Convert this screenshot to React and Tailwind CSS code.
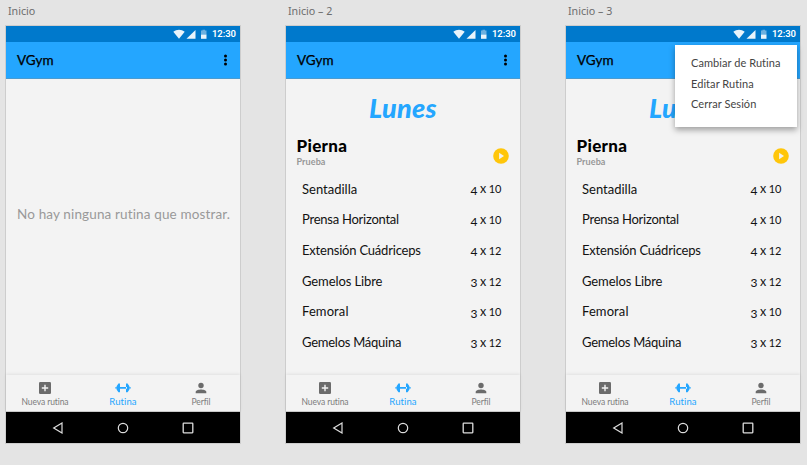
import React from "react";

const exercises = [
  { name: "Sentadilla", track: "tracking-[0px]", sets: "4", reps: "10" },
  { name: "Prensa Horizontal", track: "tracking-[-0.25px]", sets: "4", reps: "10" },
  { name: "Extensión Cuádriceps", track: "tracking-[-0.2px]", sets: "4", reps: "12" },
  { name: "Gemelos Libre", track: "tracking-[-0.1px]", sets: "3", reps: "12" },
  { name: "Femoral", track: "tracking-[0.1px]", sets: "3", reps: "10" },
  { name: "Gemelos Máquina", track: "tracking-[-0.25px]", sets: "3", reps: "12" },
];

function StatusBar() {
  return (
    <div className="flex h-4 shrink-0 items-center justify-end bg-[#0079cc] pr-[3px]">
      <svg className="h-4 w-[36px] shrink-0" viewBox="0 0 36 16">
        <path d="M0.3 5.7C3.5 3 8.5 3 11.7 5.7L6 12.8Z" fill="#e9f4fb" />
        <path d="M22.5 4V12.8H13.5Z" fill="#e9f4fb" />
        <path d="M28 4.5H29.5V3.8H32V4.5H33.5V9H28Z" fill="#6db1e0" />
        <path d="M28 8.7H33.5V12.8H28Z" fill="#e9f4fb" />
      </svg>
      <span className="ml-[3px] w-[25px] whitespace-nowrap font-['Roboto',sans-serif] text-[9.5px] font-semibold leading-4 tracking-[-0.1px] text-white">
        12:30
      </span>
    </div>
  );
}

function AppBar() {
  return (
    <div className="flex h-[37px] shrink-0 items-center justify-between border-b border-[#4b9bd0] bg-[#24a6ff] pl-[11px] pr-[13px]">
      <span className="font-['Lato',sans-serif] text-[13.5px] font-normal leading-[36px] text-black [-webkit-text-stroke:0.25px_black]">VGym</span>
      <svg className="h-3 w-[3px]" viewBox="0 0 3 12">
        <circle cx="1.5" cy="2" r="1.5" />
        <circle cx="1.5" cy="6" r="1.5" />
        <circle cx="1.5" cy="10" r="1.5" />
      </svg>
    </div>
  );
}

function BottomNav() {
  return (
    <div className="grid h-[37px] shrink-0 grid-cols-3 border-b border-[#c9c9c9] bg-[#f3f3f3] font-['Lato',sans-serif] text-[#7c7c7c] shadow-[0_-1px_3px_rgba(0,0,0,0.08)]">
      <div className="flex flex-col items-center pt-[7px]">
        <svg className="h-3 w-3" viewBox="0 0 12 12">
          <rect width="12" height="12" rx="1.2" fill="#6b6b6b" />
          <path d="M6 2.8V9.2M2.8 6H9.2" stroke="#f3f3f3" strokeWidth="1.4" />
        </svg>
        <span className="mt-[3px] whitespace-nowrap text-[8.5px] leading-[10px] tracking-[-0.1px]">Nueva rutina</span>
      </div>
      <div className="flex flex-col items-center pt-[7px] text-[#24a6ff]">
        <svg className="h-3 w-4" viewBox="0 0 16 12" fill="currentColor">
          <path d="M4 5H12V6.8H4ZM3.4 1.6H5V10.2H3.4L1.6 7.6V6.6H0.2V5.2H1.6V4.2ZM12.6 1.6H11V10.2H12.6L14.4 7.6V6.6H15.8V5.2H14.4V4.2Z" />
        </svg>
        <span className="mt-[3px] text-[9.5px] leading-[10px] tracking-[0.1px]">Rutina</span>
      </div>
      <div className="flex flex-col items-center pt-[7px]">
        <svg className="h-3 w-3" viewBox="0 0 12 12" fill="#6b6b6b">
          <circle cx="6" cy="3.5" r="2.7" />
          <path d="M0.7 11.3V9.8C0.7 8.1 4 7.4 6 7.4S11.3 8.1 11.3 9.8V11.3Z" />
        </svg>
        <span className="mt-[3px] text-[8.5px] leading-[10px] tracking-[-0.1px]">Perfil</span>
      </div>
    </div>
  );
}

function SystemNav() {
  return (
    <div className="flex h-[31px] shrink-0 items-center justify-between bg-black pl-[46px] pr-[46px]">
      <svg className="h-3 w-3" viewBox="0 0 12 12" fill="none" stroke="#ddd" strokeWidth="1.2">
        <path d="M10 1V11L1.7 6Z" />
      </svg>
      <svg className="h-3 w-3" viewBox="0 0 12 12" fill="none" stroke="#ddd" strokeWidth="1.2">
        <circle cx="6" cy="6" r="4.7" />
      </svg>
      <svg className="h-3 w-3" viewBox="0 0 12 12" fill="none" stroke="#ddd" strokeWidth="1.3">
        <rect x="1.2" y="1.2" width="9.6" height="9.6" rx="0.5" />
      </svg>
    </div>
  );
}

function Routine() {
  return (
    <div className="flex h-full flex-col font-['Lato',sans-serif]">
      <h1 className="pt-[12px] text-center text-[27px] font-black italic leading-[34px] tracking-[0.3px] text-[#24a6ff]">Lunes</h1>
      <div className="flex justify-between pl-[10.5px] pr-[11px] pt-[10px]">
        <div>
          <h2 className="text-[17px] font-black leading-[22px] tracking-[0.3px] text-black">Pierna</h2>
          <p className="text-[9px] font-bold leading-[10px] tracking-[0.1px] text-[#979797]">Prueba</p>
        </div>
        <svg className="mt-[13px] h-4 w-4" viewBox="0 0 16 16">
          <circle cx="8" cy="8" r="7.8" fill="#ffc60a" />
          <path d="M6.1 4.7V11.3L11 8Z" fill="#f3f3f3" />
        </svg>
      </div>
      <ul className="mt-[7px] pl-4 pr-[18.5px] text-[13px] text-[#111]">
        {exercises.map((item) => (
          <li key={item.name} className="flex h-[30.7px] items-center justify-between whitespace-nowrap">
            <span className={item.track}>{item.name}</span>
            <span className="relative top-[0.5px] flex w-[31px] items-baseline justify-between">
              <span className="relative top-[1.5px] text-[12px]">{item.sets}</span>
              <span className="text-[12.5px]">x</span>
              <span className="text-[11px]">{item.reps}</span>
            </span>
          </li>
        ))}
      </ul>
    </div>
  );
}

function Menu() {
  return (
    <div className="absolute right-[3px] top-[19px] flex h-[82px] w-[122px] flex-col bg-white pl-[16px] pt-[8px] font-['Lato',sans-serif] text-[11px] leading-[20.5px] tracking-[0.06px] text-[#444] shadow-[0_3px_6px_rgba(0,0,0,0.35)]">
      <span>Cambiar de Rutina</span>
      <span>Editar Rutina</span>
      <span>Cerrar Sesión</span>
    </div>
  );
}

function Artboard({ title, children, menu }) {
  return (
    <section className="w-[234px] shrink-0">
      <div className="h-[26px] pl-[2px] pt-[3px] font-['Noto_Sans',sans-serif] text-[10.7px] leading-4 text-[#6d6d6d]">{title}</div>
      <div className="relative flex h-[417px] flex-col bg-[#f3f3f3] shadow-[0_0_0_1px_#cdcdcd]">
        <StatusBar />
        <AppBar />
        <main className="h-[296px] shrink-0">{children}</main>
        <BottomNav />
        <SystemNav />
        {menu && <Menu />}
      </div>
    </section>
  );
}

export default function App() {
  return (
    <div className="flex h-[465px] w-[807px] gap-[46px] overflow-hidden bg-[#e4e4e4] pl-[6px]">
      <Artboard title="Inicio">
        <p className="whitespace-nowrap pl-[11px] pt-[125px] font-['Lato',sans-serif] text-[13.5px] leading-5 tracking-[0.14px] text-[#999]">
          No hay ninguna rutina que mostrar.
        </p>
      </Artboard>
      <Artboard title="Inicio – 2">
        <Routine />
      </Artboard>
      <Artboard title="Inicio – 3" menu>
        <Routine />
      </Artboard>
    </div>
  );
}
